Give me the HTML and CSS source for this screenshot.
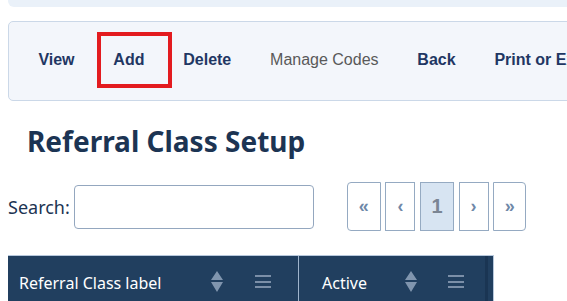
FILE: index.html
```html
<!DOCTYPE html>
<html>
<head>
  <title>Referral Class Setup</title>
  <link rel="stylesheet" href="styles.css">
</head>
<body>
  <div class="page">
    <div class="topbar"></div>
    <nav class="toolbar">
      <a class="tool">View</a>
      <a class="tool selected">Add</a>
      <a class="tool">Delete</a>
      <a class="tool disabled">Manage Codes</a>
      <a class="tool">Back</a>
      <a class="tool">Print or Export</a>
    </nav>
    <h1>Referral Class Setup</h1>
    <div class="controls">
      <label class="search">Search:<input type="text"></label>
      <div class="pager">
        <button class="pg first">&laquo;</button>
        <button class="pg">&lsaquo;</button>
        <button class="pg current">1</button>
        <button class="pg">&rsaquo;</button>
        <button class="pg last">&raquo;</button>
      </div>
    </div>
    <div class="grid">
      <div class="th col-label">
        <span class="th-text">Referral Class label</span>
        <svg class="sort" width="12" height="21" viewBox="0 0 12 21"><path d="M6 0 L12 9 L0 9 Z M0 11 L12 11 L6 21 Z" fill="#8095ae"/></svg>
        <span class="menu"><i></i><i></i><i></i></span>
      </div>
      <div class="th col-active">
        <span class="th-text">Active</span>
        <svg class="sort" width="12" height="21" viewBox="0 0 12 21"><path d="M6 0 L12 9 L0 9 Z M0 11 L12 11 L6 21 Z" fill="#8095ae"/></svg>
        <span class="menu"><i></i><i></i><i></i></span>
        <span class="grip"></span>
      </div>
    </div>
  </div>
</body>
</html>
```

FILE: styles.css
```css
body {
  margin: 0;
  padding: 0;
  background-color: #fff;
  overflow: hidden;
  font-family: "Noto Sans", "Open Sans", sans-serif;
}
.page {
  padding-left: 8px;
}
.topbar {
  height: 7px;
  width: 700px;
  background-color: #eaf1f9;
  border-radius: 0 0 6px 6px;
}
.toolbar {
  display: flex;
  align-items: center;
  width: 760px;
  height: 78px;
  margin-top: 14px;
  padding-left: 10px;
  background-color: #f3f6fb;
  border: 1px solid #cbd8e8;
  border-radius: 5px;
  white-space: nowrap;
  box-sizing: content-box;
}
.tool {
  position: relative;
  font-family: "Liberation Sans", Arial, sans-serif;
  font-size: 16px;
  font-weight: bold;
  color: #1f3763;
  padding: 19px 19.4px;
  margin-bottom: 3px;
  line-height: 18px;
}
.tool.selected::after {
  content: "";
  position: absolute;
  left: 3px;
  right: -8px;
  top: 0;
  bottom: 0;
  border: 4px solid #e31b1f;
}
.tool.disabled {
  font-weight: normal;
  color: #595959;
}
h1 {
  margin: 20px 0 0 19px;
  font-size: 28px;
  line-height: 40px;
  font-weight: bold;
  color: #1c3453;
}
.controls {
  display: flex;
  align-items: center;
  margin-top: 21px;
}
.search {
  display: flex;
  align-items: center;
  font-size: 18px;
  color: #1c3453;
}
.search input {
  width: 240px;
  height: 44px;
  box-sizing: border-box;
  margin-left: 4px;
  border: 1px solid #94a7bf;
  border-radius: 4px;
}
.pager {
  display: flex;
  gap: 4.6px;
  margin-left: 33px;
}
.pg {
  width: 30px;
  height: 49px;
  padding: 0;
  background-color: #fff;
  border: 1px solid #95aac2;
  border-radius: 0;
  color: #6f88a8;
  font-family: "Liberation Sans", Arial, sans-serif;
  font-size: 18px;
  font-weight: bold;
}
.pg.first {
  width: 34px;
  border-radius: 4px 0 0 4px;
}
.pg.current {
  width: 34px;
  background-color: #d7e4f2;
  color: #7a8594;
  font-size: 20px;
}
.pg.last {
  width: 33px;
  border-radius: 0 4px 4px 0;
}
.grid {
  display: flex;
  margin-top: 24px;
  width: 485px;
  height: 60px;
  background-color: #213f5f;
  border-top: 1px solid #b7c8dc;
  border-right: 1px solid #b7c8dc;
}
.th {
  position: relative;
  display: flex;
  align-items: center;
  height: 54px;
  color: #fff;
  font-size: 16px;
}
.col-label {
  width: 290px;
  border-right: 1px solid #9fb4cc;
}
.col-active {
  flex: 1;
}
.th-text {
  padding-left: 11px;
}
.col-active .th-text {
  padding-left: 23px;
}
.sort {
  position: absolute;
  top: 15px;
}
.col-label .sort {
  left: 203px;
}
.col-active .sort {
  left: 106px;
}
.menu {
  position: absolute;
  top: 19px;
  width: 16px;
  display: flex;
  flex-direction: column;
  gap: 3.5px;
}
.menu i {
  height: 2px;
  background-color: #7b8fa8;
}
.col-label .menu {
  left: 247px;
}
.col-active .menu {
  left: 149px;
}
.grip {
  position: absolute;
  right: 5px;
  top: 0;
  width: 3px;
  height: 60px;
  background-color: #1a3553;
}
```
